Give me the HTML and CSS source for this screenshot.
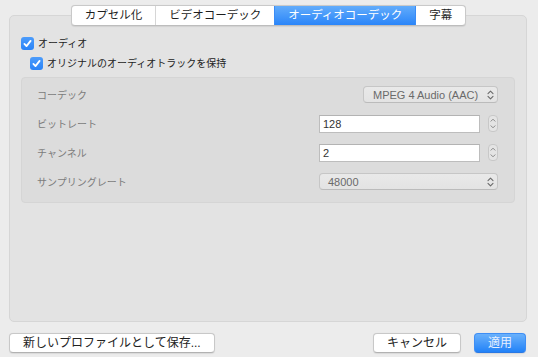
FILE: index.html
```html
<!DOCTYPE html>
<html lang="ja">
<head>
<meta charset="utf-8">
<link rel="stylesheet" href="styles.css">
</head>
<body>
<div class="window">
  <div class="tabs">
    <div class="tab">カプセル化</div>
    <div class="tab">ビデオコーデック</div>
    <div class="tab active">オーディオコーデック</div>
    <div class="tab">字幕</div>
  </div>
  <div class="panel">
    <div class="check">
      <span class="box"><svg width="13" height="13" viewBox="0 0 13 13"><path d="M3.4 6.9 L5.5 9.1 L9.6 3.9" fill="none" stroke="#fff" stroke-width="1.8" stroke-linecap="round" stroke-linejoin="round"/></svg></span>
      <span>オーディオ</span>
    </div>
    <div class="check sub">
      <span class="box"><svg width="13" height="13" viewBox="0 0 13 13"><path d="M3.4 6.9 L5.5 9.1 L9.6 3.9" fill="none" stroke="#fff" stroke-width="1.8" stroke-linecap="round" stroke-linejoin="round"/></svg></span>
      <span>オリジナルのオーディオトラックを保持</span>
    </div>
    <div class="group">
      <div class="label">コーデック</div>
      <div class="ctrl">
        <div class="popup narrow"><span>MPEG 4 Audio (AAC)</span>
          <svg class="chev" width="7" height="10" viewBox="0 0 7 10"><path d="M1 3.6 L3.5 1.2 L6 3.6 M1 6.4 L3.5 8.8 L6 6.4" fill="none" stroke="#6a6a6a" stroke-width="1.1" stroke-linecap="round" stroke-linejoin="round"/></svg>
        </div>
      </div>
      <div class="label">ビットレート</div>
      <div class="ctrl fieldrow">
        <div class="field">128</div>
        <div class="stepper"><svg width="10" height="17" viewBox="0 0 10 17"><path d="M3 6.2 L5 4.2 L7 6.2 M3 10.8 L5 12.8 L7 10.8" fill="none" stroke="#888" stroke-width="1" stroke-linecap="round" stroke-linejoin="round"/></svg></div>
      </div>
      <div class="label">チャンネル</div>
      <div class="ctrl fieldrow">
        <div class="field">2</div>
        <div class="stepper"><svg width="10" height="17" viewBox="0 0 10 17"><path d="M3 6.2 L5 4.2 L7 6.2 M3 10.8 L5 12.8 L7 10.8" fill="none" stroke="#888" stroke-width="1" stroke-linecap="round" stroke-linejoin="round"/></svg></div>
      </div>
      <div class="label">サンプリングレート</div>
      <div class="ctrl">
        <div class="popup"><span>48000</span>
          <svg class="chev" width="7" height="10" viewBox="0 0 7 10"><path d="M1 3.6 L3.5 1.2 L6 3.6 M1 6.4 L3.5 8.8 L6 6.4" fill="none" stroke="#6a6a6a" stroke-width="1.1" stroke-linecap="round" stroke-linejoin="round"/></svg>
        </div>
      </div>
    </div>
  </div>
  <div class="buttons">
    <button class="btn">新しいプロファイルとして保存...</button>
    <span class="spacer"></span>
    <button class="btn">キャンセル</button>
    <button class="btn primary">適用</button>
  </div>
</div>
</body>
</html>
```
FILE: styles.css
```css
html, body {
  margin: 0;
  padding: 0;
}
body {
  background: #ececec;
  font-family: "Liberation Sans", "Noto Sans CJK JP", sans-serif;
  color: #222;
}
.window {
  width: 538px;
  height: 357px;
  box-sizing: border-box;
  padding-top: 5px;
  display: flex;
  flex-direction: column;
}
.tabs {
  align-self: center;
  margin-right: 1px;
  display: flex;
  height: 21px;
  box-sizing: border-box;
  border: 1px solid #c9c9c9;
  border-bottom-color: #bdbdbd;
  border-radius: 4px;
  background: #fff;
  overflow: hidden;
  position: relative;
  z-index: 1;
  box-shadow: 0 0.5px 1px rgba(0,0,0,0.08);
}
.tab {
  padding: 0 13px;
  font-size: 11.5px;
  line-height: 19px;
  color: #1e1e1e;
  border-left: 1px solid #d6d6d6;
}
.tab:first-child {
  border-left: none;
}
.tab.active {
  background: linear-gradient(#62acfb, #2a85f9);
  color: #fff;
  border-left-color: #3a8cf6;
}
.tab.active + .tab {
  border-left-color: #3a8cf6;
}
.panel {
  margin: -11px 11px 0 9px;
  height: 307px;
  box-sizing: border-box;
  background: #e3e3e3;
  border: 1px solid #d6d6d6;
  border-radius: 5px;
  padding: 21px 11px 0 11px;
}
.check {
  display: flex;
  align-items: center;
  gap: 4px;
  height: 13px;
  font-size: 10px;
  line-height: 13px;
  color: #222;
}
.check.sub {
  margin-top: 7px;
  margin-left: 9px;
}
.box {
  width: 13px;
  height: 13px;
  border-radius: 3px;
  background: linear-gradient(#4c9cfb, #2a83f7);
  display: flex;
  flex: none;
}
.group {
  margin-top: 7px;
  background: #dcdcdc;
  border: 1px solid #d5d5d5;
  border-radius: 4px;
  padding: 6px 16px 10px 15px;
  display: grid;
  grid-template-columns: 1fr 179px;
  grid-auto-rows: 21px;
  row-gap: 8px;
  align-items: center;
}
.label {
  font-size: 10px;
  color: #7b7b7b;
}
.ctrl {
  display: flex;
  justify-content: flex-end;
  align-items: center;
}
.popup {
  width: 179px;
  height: 17px;
  box-sizing: border-box;
  border: 1px solid #c6c6c6;
  border-bottom-color: #bbb;
  border-radius: 4px;
  background: linear-gradient(#e9e9e9, #e3e3e3);
  display: flex;
  align-items: center;
  justify-content: space-between;
  padding: 0 3px 0 8px;
  font-size: 11px;
  color: #6a6a6a;
}
.popup.narrow {
  width: 135px;
  padding-left: 9px;
}
.chev {
  flex: none;
}
.fieldrow {
  gap: 8px;
}
.field {
  width: 161px;
  height: 18px;
  box-sizing: border-box;
  border: 1px solid #bdbdbd;
  border-top-color: #b3b3b3;
  background: #fff;
  font-size: 11px;
  line-height: 16px;
  padding-left: 3px;
  color: #333;
}
.stepper {
  width: 10px;
  height: 17px;
  box-sizing: border-box;
  border: 1px solid #c8c8c8;
  border-radius: 4px;
  background: #e4e4e4;
  display: flex;
  align-items: center;
  justify-content: center;
  overflow: hidden;
}
.stepper svg {
  flex: none;
}
.buttons {
  display: flex;
  gap: 13px;
  margin: 11px 12px 0 9px;
}
.spacer {
  flex: 1;
}
.btn {
  height: 20px;
  box-sizing: border-box;
  padding: 0 13px;
  border: 1px solid #c8c8c8;
  border-bottom-color: #b2b2b2;
  border-radius: 4px;
  background: #fff;
  font-family: inherit;
  font-size: 12px;
  line-height: 18px;
  color: #222;
  box-shadow: 0 0.5px 1px rgba(0,0,0,0.08);
}
.btn.primary {
  background: linear-gradient(#6ab1fb, #2282f8);
  border-color: #3e8ef5;
  border-bottom-color: #2a78e4;
  color: #e6efff;
}
```
